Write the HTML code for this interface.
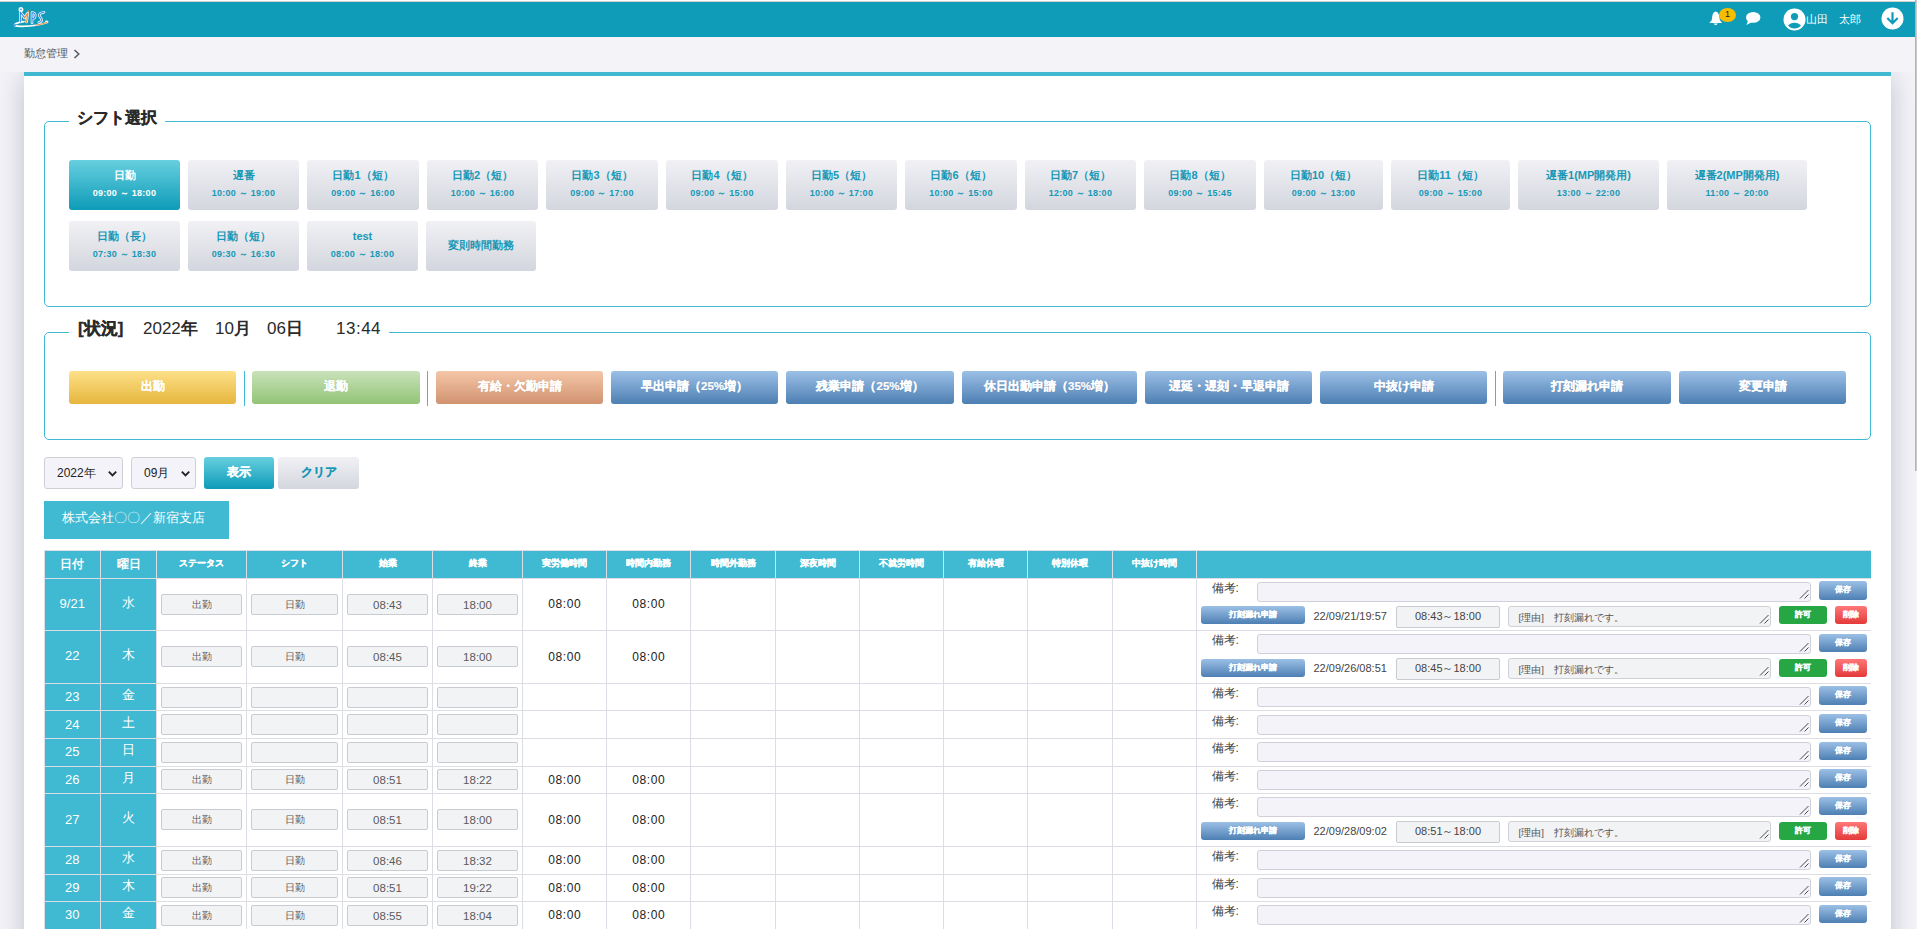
<!DOCTYPE html><html><head><meta charset="utf-8"><style>
*{box-sizing:border-box;margin:0;padding:0}
html,body{width:1917px;height:929px;overflow:hidden;background:#f3f3f8;font-family:"Liberation Sans",sans-serif;color:#333}
.a{position:absolute}
.hd{left:0;top:2px;width:1915px;height:35px;background:#0e9cb9}
.card{left:24px;top:72px;width:1867px;height:900px;background:#fff;border-top:4px solid #40b9d1;}
.fs{border:1px solid #41b9d2;border-radius:5px}
.lg{background:#fff;font-weight:bold;font-size:16px;color:#2a2a2a;-webkit-text-stroke:.3px #2a2a2a;white-space:nowrap;line-height:20px}
.sb{border-radius:3px;background:linear-gradient(#f1f1f5,#d3d6de);color:#1898b6;font-weight:bold;text-align:center;white-space:nowrap}
.sb.on{background:linear-gradient(#67cfdf,#0d9bb8);color:#fff}
.sb .t{position:absolute;left:0;right:0;top:8px;font-size:11px;line-height:14px}
.sb .m{position:absolute;left:0;right:0;top:27px;font-size:9px;line-height:12px;letter-spacing:.25px}
.ab{border-radius:3px;color:#fff;font-weight:bold;font-size:11.5px;text-align:center;line-height:31.5px;height:33px;top:371px;-webkit-text-stroke:.2px #fff;text-shadow:0 0 1px rgba(0,0,0,.12)}
.y{background:linear-gradient(#fde088,#e6b63e)}
.g{background:linear-gradient(#c9e2b9,#92c477)}
.o{background:linear-gradient(#f4c7a8,#d19270)}
.b{background:linear-gradient(#9cc0e6,#4d7fb3)}
.sep{width:1.5px;background:#41b9d2;top:371px;height:35px}
.cell{border-right:1px solid #dcdde5;border-bottom:1px solid #dcdde5}
.th{background:#40b9d2;color:#fff;font-weight:bold;text-align:center}
.inp{background:#f2f3f5;border:1px solid #c8cbd2;border-radius:2px;height:21px;font-size:11px;color:#5a5a5a;text-align:center;line-height:20px}
.val{font-size:12px;color:#222;text-align:center;letter-spacing:.6px;text-indent:.6px}
.ta{background:#f4f3f9;border:1px solid #cfd0d8;border-radius:3px}
.rz{position:absolute;right:1.5px;bottom:1.5px;width:10px;height:10px}
.btn{border-radius:3px;color:#fff;font-weight:bold;-webkit-text-stroke:.25px #fff;font-size:8px;text-align:center}
</style></head><body>
<div class="a" style="left:0;top:0;width:1917px;height:1px;background:#fff"></div>
<div class="a" style="left:0;top:1px;width:1917px;height:1px;background:#d6d1d1"></div>
<div class="a hd"></div>
<svg class="a" style="left:8px;top:4px" width="48" height="28" viewBox="8 4 48 28">
<g fill="none" stroke-linecap="round" stroke-linejoin="round">
<path d="M15 24.5 Q13 26.5 22 26.3 Q38 26 47 22.5 Q48.5 21.5 46 21.3" stroke="#fff" stroke-width="1.8"/>
<path d="M36 25.2 Q43 24 47 22.5" stroke="#f08a3c" stroke-width="1"/>
<path d="M15.5 23.8 Q19 22 24 21.6" stroke="#fff" stroke-width="1.6"/>
<circle cx="15" cy="25" r="1" fill="#3a8ee6"/>
<g stroke="#fff" stroke-width="2.6">
<path d="M20.6 12 L20.3 22 M21 13 L24.6 17.6"/>
<path d="M24.6 17.8 L27.8 13 L26.6 22"/>
<path d="M32 23 L32 12.6 Q35.5 12.6 35.2 15.6 Q35 18.6 32.3 18.8"/>
<path d="M44 12.2 Q38.8 13.2 39.3 15.8 Q41.6 18.6 41.6 20 Q41.2 22.2 38.8 22.6"/>
<circle cx="21" cy="9.4" r="1.2"/>
</g>
<path d="M20.6 12 L20.3 22 M21 13 L24.6 17.6" stroke="#3a8ee6" stroke-width="1.2"/>
<path d="M24.6 17.8 L27.8 13 L26.6 22" stroke="#f08a3c" stroke-width="1.3"/>
<circle cx="28.2" cy="11.2" r="0.9" fill="#f08a3c" stroke="none"/>
<path d="M32 23 L32 12.6 Q35.5 12.6 35.2 15.6 Q35 18.6 32.3 18.8" stroke="#3a8ee6" stroke-width="1.2"/>
<path d="M44 12.2 Q38.8 13.2 39.3 15.8 Q41.6 18.6 41.6 20 Q41.2 22.2 38.8 22.6" stroke="#3a8ee6" stroke-width="1.2"/>
<circle cx="21" cy="9.4" r="0.8" fill="#3a8ee6" stroke="none"/>
</g></svg>
<svg class="a" style="left:1708px;top:10px" width="16" height="17" viewBox="0 0 16 17">
<path d="M7.7 1.6 Q5 2 4.3 6 L3.7 10.3 L1.3 13.1 L14.2 13.1 L11.9 10.3 L11.2 6 Q10.4 2 7.7 1.6Z" fill="#fff"/>
<path d="M5.6 13.6 Q7.7 17 9.8 13.6Z" fill="#fff"/></svg>
<div class="a" style="left:1719px;top:8px;width:17px;height:14px;border-radius:50%;background:#f9bd00;color:#222;font-size:9px;line-height:13px;text-align:center">1</div>
<svg class="a" style="left:1745px;top:11px" width="16" height="15" viewBox="0 0 16 15">
<ellipse cx="8.2" cy="6.4" rx="7.2" ry="5.4" fill="#fff"/>
<path d="M3 9.5 L1.5 14 L7 11Z" fill="#fff"/></svg>
<svg class="a" style="left:1783px;top:8px" width="23" height="23" viewBox="0 0 23 23">
<circle cx="11.5" cy="11.5" r="11" fill="#fff"/>
<circle cx="11.5" cy="8.6" r="3.6" fill="#0e9cb9"/>
<path d="M5 17.2 Q11.5 12.5 18 17.2 Q15.5 20.5 11.5 20.5 Q7.5 20.5 5 17.2Z" fill="#0e9cb9"/></svg>
<div class="a" style="left:1806px;top:11px;font-size:11px;line-height:16px;color:#fff;white-space:nowrap">山田　太郎</div>
<svg class="a" style="left:1881px;top:7px" width="23" height="23" viewBox="0 0 23 23">
<circle cx="11.5" cy="11.5" r="11" fill="#fff"/>
<path d="M11.5 5.3 L11.5 16 M6.3 11 L11.5 16.2 L16.7 11" stroke="#0e9cb9" stroke-width="2.2" fill="none" stroke-linecap="butt"/></svg>
<div class="a" style="left:1915px;top:0;width:1px;height:471px;background:#b2b2b7"></div>
<div class="a" style="left:1916px;top:0;width:1px;height:471px;background:#cacacd"></div>
<div class="a" style="left:24px;top:45px;font-size:11px;line-height:16px;color:#555b62;white-space:nowrap">勤怠管理</div>
<svg class="a" style="left:72.8px;top:49px" width="8" height="10" viewBox="0 0 8 10"><path d="M1.5 1 L5.8 5 L1.5 9" stroke="#555b62" stroke-width="1.5" fill="none"/></svg>
<div class="a" style="left:0;top:72px;width:1915px;height:857px;overflow:hidden"><div class="a" style="left:24px;top:0;width:1867px;height:1000px;box-shadow:0 4px 26px rgba(45,45,85,.26)"></div></div>
<div class="a card"></div>
<div class="a fs" style="left:44px;top:121px;width:1827px;height:186px"></div>
<div class="a lg" style="left:69px;top:108px;padding:0 8.5px 0 7.8px">シフト選択</div>
<div class="a sb on" style="left:69px;top:160px;width:111px;height:50px"><div class="t">日勤</div><div class="m">09:00 ～ 18:00</div></div>
<div class="a sb" style="left:188px;top:160px;width:111px;height:50px"><div class="t">遅番</div><div class="m">10:00 ～ 19:00</div></div>
<div class="a sb" style="left:307px;top:160px;width:112px;height:50px"><div class="t">日勤1（短）</div><div class="m">09:00 ～ 16:00</div></div>
<div class="a sb" style="left:427px;top:160px;width:111px;height:50px"><div class="t">日勤2（短）</div><div class="m">10:00 ～ 16:00</div></div>
<div class="a sb" style="left:546px;top:160px;width:112px;height:50px"><div class="t">日勤3（短）</div><div class="m">09:00 ～ 17:00</div></div>
<div class="a sb" style="left:666px;top:160px;width:112px;height:50px"><div class="t">日勤4（短）</div><div class="m">09:00 ～ 15:00</div></div>
<div class="a sb" style="left:786px;top:160px;width:111px;height:50px"><div class="t">日勤5（短）</div><div class="m">10:00 ～ 17:00</div></div>
<div class="a sb" style="left:905px;top:160px;width:112px;height:50px"><div class="t">日勤6（短）</div><div class="m">10:00 ～ 15:00</div></div>
<div class="a sb" style="left:1025px;top:160px;width:111px;height:50px"><div class="t">日勤7（短）</div><div class="m">12:00 ～ 18:00</div></div>
<div class="a sb" style="left:1144px;top:160px;width:112px;height:50px"><div class="t">日勤8（短）</div><div class="m">09:00 ～ 15:45</div></div>
<div class="a sb" style="left:1264px;top:160px;width:119px;height:50px"><div class="t">日勤10（短）</div><div class="m">09:00 ～ 13:00</div></div>
<div class="a sb" style="left:1391px;top:160px;width:119px;height:50px"><div class="t">日勤11（短）</div><div class="m">09:00 ～ 15:00</div></div>
<div class="a sb" style="left:1518px;top:160px;width:141px;height:50px"><div class="t">遅番1(MP開発用)</div><div class="m">13:00 ～ 22:00</div></div>
<div class="a sb" style="left:1667px;top:160px;width:140px;height:50px"><div class="t">遅番2(MP開発用)</div><div class="m">11:00 ～ 20:00</div></div>
<div class="a sb" style="left:69px;top:221px;width:111px;height:50px"><div class="t">日勤（長）</div><div class="m">07:30 ～ 18:30</div></div>
<div class="a sb" style="left:188px;top:221px;width:111px;height:50px"><div class="t">日勤（短）</div><div class="m">09:30 ～ 16:30</div></div>
<div class="a sb" style="left:307px;top:221px;width:111px;height:50px"><div class="t">test</div><div class="m">08:00 ～ 18:00</div></div>
<div class="a sb" style="left:426px;top:221px;width:110px;height:50px"><div class="t" style="top:17px">変則時間勤務</div></div>
<div class="a fs" style="left:44px;top:332px;width:1827px;height:108px"></div>
<div class="a lg" style="left:69px;top:319px;padding:0 9px 0 9px;width:320px;font-size:17px">[状況]<span style="position:absolute;left:74px;font-weight:normal;-webkit-text-stroke:0">2022<b>年</b></span><span style="position:absolute;left:146px;font-weight:normal;-webkit-text-stroke:0">10<b>月</b></span><span style="position:absolute;left:198px;font-weight:normal;-webkit-text-stroke:0">06<b>日</b></span><span style="position:absolute;left:267px;font-weight:normal;letter-spacing:.5px;-webkit-text-stroke:0">13:44</span></div>
<div class="a ab y" style="left:69px;width:167px">出勤</div>
<div class="a ab g" style="left:252px;width:168px">退勤</div>
<div class="a ab o" style="left:436px;width:167px">有給・欠勤申請</div>
<div class="a ab b" style="left:611px;width:167px">早出申請（25%増）</div>
<div class="a ab b" style="left:786px;width:168px">残業申請（25%増）</div>
<div class="a ab b" style="left:962px;width:175px">休日出勤申請（35%増）</div>
<div class="a ab b" style="left:1145px;width:167px">遅延・遅刻・早退申請</div>
<div class="a ab b" style="left:1320px;width:167px">中抜け申請</div>
<div class="a ab b" style="left:1503px;width:168px">打刻漏れ申請</div>
<div class="a ab b" style="left:1679px;width:167px">変更申請</div>
<div class="a sep" style="left:243.5px"></div>
<div class="a sep" style="left:426.5px"></div>
<div class="a sep" style="left:1494.5px"></div>
<div class="a" style="left:44px;top:457px;width:79px;height:32px;background:#f4f3f9;border:1px solid #cfd0d6;border-radius:3px;font-size:12px;line-height:30px;padding-left:12px;color:#222">2022年<svg style="position:absolute;right:4.5px;top:11.5px" width="11" height="8" viewBox="0 0 11 8"><path d="M1.8 1.6 L5.5 5.3 L9.2 1.6" stroke="#222" stroke-width="1.9" fill="none"/></svg></div>
<div class="a" style="left:131px;top:457px;width:65px;height:32px;background:#f4f3f9;border:1px solid #cfd0d6;border-radius:3px;font-size:12px;line-height:30px;padding-left:12px;color:#222">09月<svg style="position:absolute;right:4.5px;top:11.5px" width="11" height="8" viewBox="0 0 11 8"><path d="M1.8 1.6 L5.5 5.3 L9.2 1.6" stroke="#222" stroke-width="1.9" fill="none"/></svg></div>
<div class="a" style="left:204px;top:457px;width:70px;height:32px;border-radius:3px;background:linear-gradient(#67cfdf,#0d9bb8);color:#fff;font-weight:bold;-webkit-text-stroke:.25px #fff;font-size:12px;line-height:31px;text-align:center">表示</div>
<div class="a" style="left:278px;top:457px;width:81px;height:32px;border-radius:3px;background:linear-gradient(#f1f1f5,#d3d6de);color:#1898b6;font-weight:bold;-webkit-text-stroke:.2px #1898b6;font-size:12px;line-height:31px;text-align:center">クリア</div>
<div class="a" style="left:44px;top:501px;width:185px;height:38px;background:#40b9d2;color:#fff;font-size:13.3px;line-height:34px;padding-left:18px;white-space:nowrap">株式会社〇〇／新宿支店</div>
<div class="a" style="left:44px;top:551px;width:1827px;height:27px;background:#40b9d2"></div>
<div class="a" style="left:44px;top:551px;width:56.5px;height:27px;color:#fff;font-weight:bold;font-size:11.5px;line-height:27px;text-align:center;white-space:nowrap">日付</div>
<div class="a" style="left:100.5px;top:551px;width:56.0px;height:27px;color:#fff;font-weight:bold;font-size:11.5px;line-height:27px;text-align:center;white-space:nowrap">曜日</div>
<div class="a" style="left:156.5px;top:551px;width:90.0px;height:27px;color:#fff;font-weight:bold;-webkit-text-stroke:.3px #fff;font-size:9px;line-height:25px;text-align:center;white-space:nowrap">ステータス</div>
<div class="a" style="left:246.5px;top:551px;width:96.0px;height:27px;color:#fff;font-weight:bold;-webkit-text-stroke:.3px #fff;font-size:9px;line-height:25px;text-align:center;white-space:nowrap">シフト</div>
<div class="a" style="left:342.5px;top:551px;width:90.0px;height:27px;color:#fff;font-weight:bold;-webkit-text-stroke:.3px #fff;font-size:9px;line-height:25px;text-align:center;white-space:nowrap">始業</div>
<div class="a" style="left:432.5px;top:551px;width:90.0px;height:27px;color:#fff;font-weight:bold;-webkit-text-stroke:.3px #fff;font-size:9px;line-height:25px;text-align:center;white-space:nowrap">終業</div>
<div class="a" style="left:522.5px;top:551px;width:84.0px;height:27px;color:#fff;font-weight:bold;-webkit-text-stroke:.3px #fff;font-size:9px;line-height:25px;text-align:center;white-space:nowrap">実労働時間</div>
<div class="a" style="left:606.5px;top:551px;width:84.0px;height:27px;color:#fff;font-weight:bold;-webkit-text-stroke:.3px #fff;font-size:9px;line-height:25px;text-align:center;white-space:nowrap">時間内勤務</div>
<div class="a" style="left:690.5px;top:551px;width:85.0px;height:27px;color:#fff;font-weight:bold;-webkit-text-stroke:.3px #fff;font-size:9px;line-height:25px;text-align:center;white-space:nowrap">時間外勤務</div>
<div class="a" style="left:775.5px;top:551px;width:84.0px;height:27px;color:#fff;font-weight:bold;-webkit-text-stroke:.3px #fff;font-size:9px;line-height:25px;text-align:center;white-space:nowrap">深夜時間</div>
<div class="a" style="left:859.5px;top:551px;width:84.0px;height:27px;color:#fff;font-weight:bold;-webkit-text-stroke:.3px #fff;font-size:9px;line-height:25px;text-align:center;white-space:nowrap">不就労時間</div>
<div class="a" style="left:943.5px;top:551px;width:84.0px;height:27px;color:#fff;font-weight:bold;-webkit-text-stroke:.3px #fff;font-size:9px;line-height:25px;text-align:center;white-space:nowrap">有給休暇</div>
<div class="a" style="left:1027.5px;top:551px;width:85.0px;height:27px;color:#fff;font-weight:bold;-webkit-text-stroke:.3px #fff;font-size:9px;line-height:25px;text-align:center;white-space:nowrap">特別休暇</div>
<div class="a" style="left:1112.5px;top:551px;width:84.0px;height:27px;color:#fff;font-weight:bold;-webkit-text-stroke:.3px #fff;font-size:9px;line-height:25px;text-align:center;white-space:nowrap">中抜け時間</div>
<div class="a" style="left:1196.5px;top:551px;width:674.0px;height:27px;color:#fff;font-weight:bold;-webkit-text-stroke:.3px #fff;font-size:9px;line-height:25px;text-align:center;white-space:nowrap"></div>
<div class="a" style="left:44px;top:578px;width:112.5px;height:52.39999999999998px;background:#40b9d2"></div>
<div class="a" style="left:44px;top:578px;width:56.5px;height:52.39999999999998px;color:#fff;font-size:13px;line-height:52.39999999999998px;text-align:center">9/21</div>
<div class="a" style="left:100.5px;top:578px;width:56px;height:52.39999999999998px;color:#fff;font-size:12.5px;line-height:50.39999999999998px;text-align:center">水</div>
<div class="a inp" style="left:161.0px;top:593.7px;width:81.0px;font-size:10px;line-height:19px">出勤</div>
<div class="a inp" style="left:251.0px;top:593.7px;width:87.0px;font-size:10px;line-height:19px">日勤</div>
<div class="a inp" style="left:347.0px;top:593.7px;width:81.0px;font-size:11.5px;line-height:20px">08:43</div>
<div class="a inp" style="left:437.0px;top:593.7px;width:81.0px;font-size:11.5px;line-height:20px">18:00</div>
<div class="a val" style="left:522.5px;top:596.2px;width:84.0px;line-height:16px">08:00</div>
<div class="a val" style="left:606.5px;top:596.2px;width:84.0px;line-height:16px">08:00</div>
<div class="a" style="left:1211.5px;top:581px;font-size:12px;line-height:14px;color:#444;white-space:nowrap">備考:</div>
<div class="a ta" style="left:1257px;top:581.8px;width:554px;height:20px"><svg class="rz" viewBox="0 0 10 10"><path d="M9.5 1 L1 9.5 M9.5 5.5 L5.5 9.5" stroke="#4a4a4a" stroke-width="1"/></svg></div>
<div class="a btn b" style="left:1819px;top:581.2px;width:48px;height:18.5px;line-height:18.5px">保存</div>
<div class="a btn b" style="left:1201px;top:606.3px;width:104px;height:18px;line-height:18px">打刻漏れ申請</div>
<div class="a" style="left:1313.5px;top:609px;font-size:11px;line-height:14px;color:#444;white-space:nowrap">22/09/21/19:57</div>
<div class="a inp" style="left:1396px;top:606px;width:104px;height:21.5px;font-size:11px;line-height:19.5px;color:#444">08:43～18:00</div>
<div class="a ta" style="left:1508px;top:606px;width:263px;height:20.5px;background:#f2f3f5;font-size:9.6px;line-height:22px;padding-left:9.5px;color:#555;white-space:nowrap">[理由]　打刻漏れです。<svg class="rz" viewBox="0 0 10 10"><path d="M9.5 1 L1 9.5 M9.5 5.5 L5.5 9.5" stroke="#4a4a4a" stroke-width="1"/></svg></div>
<div class="a btn" style="left:1779px;top:606.3px;width:48px;height:18px;line-height:18px;background:#27a744">許可</div>
<div class="a btn" style="left:1835px;top:606.3px;width:32px;height:18px;line-height:18px;background:linear-gradient(#f77,#e33a3a)">削除</div>
<div class="a" style="left:44px;top:630.4px;width:112.5px;height:52.80000000000007px;background:#40b9d2"></div>
<div class="a" style="left:44px;top:630.4px;width:56.5px;height:52.80000000000007px;color:#fff;font-size:13px;line-height:52.80000000000007px;text-align:center">22</div>
<div class="a" style="left:100.5px;top:630.4px;width:56px;height:52.80000000000007px;color:#fff;font-size:12.5px;line-height:50.80000000000007px;text-align:center">木</div>
<div class="a inp" style="left:161.0px;top:646.3px;width:81.0px;font-size:10px;line-height:19px">出勤</div>
<div class="a inp" style="left:251.0px;top:646.3px;width:87.0px;font-size:10px;line-height:19px">日勤</div>
<div class="a inp" style="left:347.0px;top:646.3px;width:81.0px;font-size:11.5px;line-height:20px">08:45</div>
<div class="a inp" style="left:437.0px;top:646.3px;width:81.0px;font-size:11.5px;line-height:20px">18:00</div>
<div class="a val" style="left:522.5px;top:648.8px;width:84.0px;line-height:16px">08:00</div>
<div class="a val" style="left:606.5px;top:648.8px;width:84.0px;line-height:16px">08:00</div>
<div class="a" style="left:1211.5px;top:633.4px;font-size:12px;line-height:14px;color:#444;white-space:nowrap">備考:</div>
<div class="a ta" style="left:1257px;top:634.1999999999999px;width:554px;height:20px"><svg class="rz" viewBox="0 0 10 10"><path d="M9.5 1 L1 9.5 M9.5 5.5 L5.5 9.5" stroke="#4a4a4a" stroke-width="1"/></svg></div>
<div class="a btn b" style="left:1819px;top:633.6px;width:48px;height:18.5px;line-height:18.5px">保存</div>
<div class="a btn b" style="left:1201px;top:658.6999999999999px;width:104px;height:18px;line-height:18px">打刻漏れ申請</div>
<div class="a" style="left:1313.5px;top:661.4px;font-size:11px;line-height:14px;color:#444;white-space:nowrap">22/09/26/08:51</div>
<div class="a inp" style="left:1396px;top:658.4px;width:104px;height:21.5px;font-size:11px;line-height:19.5px;color:#444">08:45～18:00</div>
<div class="a ta" style="left:1508px;top:658.4px;width:263px;height:20.5px;background:#f2f3f5;font-size:9.6px;line-height:22px;padding-left:9.5px;color:#555;white-space:nowrap">[理由]　打刻漏れです。<svg class="rz" viewBox="0 0 10 10"><path d="M9.5 1 L1 9.5 M9.5 5.5 L5.5 9.5" stroke="#4a4a4a" stroke-width="1"/></svg></div>
<div class="a btn" style="left:1779px;top:658.6999999999999px;width:48px;height:18px;line-height:18px;background:#27a744">許可</div>
<div class="a btn" style="left:1835px;top:658.6999999999999px;width:32px;height:18px;line-height:18px;background:linear-gradient(#f77,#e33a3a)">削除</div>
<div class="a" style="left:44px;top:683.2px;width:112.5px;height:27.59999999999991px;background:#40b9d2"></div>
<div class="a" style="left:44px;top:683.2px;width:56.5px;height:27.59999999999991px;color:#fff;font-size:13px;line-height:27.59999999999991px;text-align:center">23</div>
<div class="a" style="left:100.5px;top:683.2px;width:56px;height:27.59999999999991px;color:#fff;font-size:12.5px;line-height:25.59999999999991px;text-align:center">金</div>
<div class="a inp" style="left:161.0px;top:686.5px;width:81.0px;font-size:10px;line-height:19px"></div>
<div class="a inp" style="left:251.0px;top:686.5px;width:87.0px;font-size:10px;line-height:19px"></div>
<div class="a inp" style="left:347.0px;top:686.5px;width:81.0px;font-size:11.5px;line-height:20px"></div>
<div class="a inp" style="left:437.0px;top:686.5px;width:81.0px;font-size:11.5px;line-height:20px"></div>
<div class="a" style="left:1211.5px;top:686.2px;font-size:12px;line-height:14px;color:#444;white-space:nowrap">備考:</div>
<div class="a ta" style="left:1257px;top:687.0px;width:554px;height:20px"><svg class="rz" viewBox="0 0 10 10"><path d="M9.5 1 L1 9.5 M9.5 5.5 L5.5 9.5" stroke="#4a4a4a" stroke-width="1"/></svg></div>
<div class="a btn b" style="left:1819px;top:686.4000000000001px;width:48px;height:18.5px;line-height:18.5px">保存</div>
<div class="a" style="left:44px;top:710.8px;width:112.5px;height:27.600000000000023px;background:#40b9d2"></div>
<div class="a" style="left:44px;top:710.8px;width:56.5px;height:27.600000000000023px;color:#fff;font-size:13px;line-height:27.600000000000023px;text-align:center">24</div>
<div class="a" style="left:100.5px;top:710.8px;width:56px;height:27.600000000000023px;color:#fff;font-size:12.5px;line-height:25.600000000000023px;text-align:center">土</div>
<div class="a inp" style="left:161.0px;top:714.0999999999999px;width:81.0px;font-size:10px;line-height:19px"></div>
<div class="a inp" style="left:251.0px;top:714.0999999999999px;width:87.0px;font-size:10px;line-height:19px"></div>
<div class="a inp" style="left:347.0px;top:714.0999999999999px;width:81.0px;font-size:11.5px;line-height:20px"></div>
<div class="a inp" style="left:437.0px;top:714.0999999999999px;width:81.0px;font-size:11.5px;line-height:20px"></div>
<div class="a" style="left:1211.5px;top:713.8px;font-size:12px;line-height:14px;color:#444;white-space:nowrap">備考:</div>
<div class="a ta" style="left:1257px;top:714.5999999999999px;width:554px;height:20px"><svg class="rz" viewBox="0 0 10 10"><path d="M9.5 1 L1 9.5 M9.5 5.5 L5.5 9.5" stroke="#4a4a4a" stroke-width="1"/></svg></div>
<div class="a btn b" style="left:1819px;top:714.0px;width:48px;height:18.5px;line-height:18.5px">保存</div>
<div class="a" style="left:44px;top:738.4px;width:112.5px;height:27.700000000000045px;background:#40b9d2"></div>
<div class="a" style="left:44px;top:738.4px;width:56.5px;height:27.700000000000045px;color:#fff;font-size:13px;line-height:27.700000000000045px;text-align:center">25</div>
<div class="a" style="left:100.5px;top:738.4px;width:56px;height:27.700000000000045px;color:#fff;font-size:12.5px;line-height:25.700000000000045px;text-align:center">日</div>
<div class="a inp" style="left:161.0px;top:741.75px;width:81.0px;font-size:10px;line-height:19px"></div>
<div class="a inp" style="left:251.0px;top:741.75px;width:87.0px;font-size:10px;line-height:19px"></div>
<div class="a inp" style="left:347.0px;top:741.75px;width:81.0px;font-size:11.5px;line-height:20px"></div>
<div class="a inp" style="left:437.0px;top:741.75px;width:81.0px;font-size:11.5px;line-height:20px"></div>
<div class="a" style="left:1211.5px;top:741.4px;font-size:12px;line-height:14px;color:#444;white-space:nowrap">備考:</div>
<div class="a ta" style="left:1257px;top:742.1999999999999px;width:554px;height:20px"><svg class="rz" viewBox="0 0 10 10"><path d="M9.5 1 L1 9.5 M9.5 5.5 L5.5 9.5" stroke="#4a4a4a" stroke-width="1"/></svg></div>
<div class="a btn b" style="left:1819px;top:741.6px;width:48px;height:18.5px;line-height:18.5px">保存</div>
<div class="a" style="left:44px;top:766.1px;width:112.5px;height:27.299999999999955px;background:#40b9d2"></div>
<div class="a" style="left:44px;top:766.1px;width:56.5px;height:27.299999999999955px;color:#fff;font-size:13px;line-height:27.299999999999955px;text-align:center">26</div>
<div class="a" style="left:100.5px;top:766.1px;width:56px;height:27.299999999999955px;color:#fff;font-size:12.5px;line-height:25.299999999999955px;text-align:center">月</div>
<div class="a inp" style="left:161.0px;top:769.25px;width:81.0px;font-size:10px;line-height:19px">出勤</div>
<div class="a inp" style="left:251.0px;top:769.25px;width:87.0px;font-size:10px;line-height:19px">日勤</div>
<div class="a inp" style="left:347.0px;top:769.25px;width:81.0px;font-size:11.5px;line-height:20px">08:51</div>
<div class="a inp" style="left:437.0px;top:769.25px;width:81.0px;font-size:11.5px;line-height:20px">18:22</div>
<div class="a val" style="left:522.5px;top:771.75px;width:84.0px;line-height:16px">08:00</div>
<div class="a val" style="left:606.5px;top:771.75px;width:84.0px;line-height:16px">08:00</div>
<div class="a" style="left:1211.5px;top:769.1px;font-size:12px;line-height:14px;color:#444;white-space:nowrap">備考:</div>
<div class="a ta" style="left:1257px;top:769.9px;width:554px;height:20px"><svg class="rz" viewBox="0 0 10 10"><path d="M9.5 1 L1 9.5 M9.5 5.5 L5.5 9.5" stroke="#4a4a4a" stroke-width="1"/></svg></div>
<div class="a btn b" style="left:1819px;top:769.3000000000001px;width:48px;height:18.5px;line-height:18.5px">保存</div>
<div class="a" style="left:44px;top:793.4px;width:112.5px;height:53.0px;background:#40b9d2"></div>
<div class="a" style="left:44px;top:793.4px;width:56.5px;height:53.0px;color:#fff;font-size:13px;line-height:53.0px;text-align:center">27</div>
<div class="a" style="left:100.5px;top:793.4px;width:56px;height:53.0px;color:#fff;font-size:12.5px;line-height:51.0px;text-align:center">火</div>
<div class="a inp" style="left:161.0px;top:809.4px;width:81.0px;font-size:10px;line-height:19px">出勤</div>
<div class="a inp" style="left:251.0px;top:809.4px;width:87.0px;font-size:10px;line-height:19px">日勤</div>
<div class="a inp" style="left:347.0px;top:809.4px;width:81.0px;font-size:11.5px;line-height:20px">08:51</div>
<div class="a inp" style="left:437.0px;top:809.4px;width:81.0px;font-size:11.5px;line-height:20px">18:00</div>
<div class="a val" style="left:522.5px;top:811.9px;width:84.0px;line-height:16px">08:00</div>
<div class="a val" style="left:606.5px;top:811.9px;width:84.0px;line-height:16px">08:00</div>
<div class="a" style="left:1211.5px;top:796.4px;font-size:12px;line-height:14px;color:#444;white-space:nowrap">備考:</div>
<div class="a ta" style="left:1257px;top:797.1999999999999px;width:554px;height:20px"><svg class="rz" viewBox="0 0 10 10"><path d="M9.5 1 L1 9.5 M9.5 5.5 L5.5 9.5" stroke="#4a4a4a" stroke-width="1"/></svg></div>
<div class="a btn b" style="left:1819px;top:796.6px;width:48px;height:18.5px;line-height:18.5px">保存</div>
<div class="a btn b" style="left:1201px;top:821.6999999999999px;width:104px;height:18px;line-height:18px">打刻漏れ申請</div>
<div class="a" style="left:1313.5px;top:824.4px;font-size:11px;line-height:14px;color:#444;white-space:nowrap">22/09/28/09:02</div>
<div class="a inp" style="left:1396px;top:821.4px;width:104px;height:21.5px;font-size:11px;line-height:19.5px;color:#444">08:51～18:00</div>
<div class="a ta" style="left:1508px;top:821.4px;width:263px;height:20.5px;background:#f2f3f5;font-size:9.6px;line-height:22px;padding-left:9.5px;color:#555;white-space:nowrap">[理由]　打刻漏れです。<svg class="rz" viewBox="0 0 10 10"><path d="M9.5 1 L1 9.5 M9.5 5.5 L5.5 9.5" stroke="#4a4a4a" stroke-width="1"/></svg></div>
<div class="a btn" style="left:1779px;top:821.6999999999999px;width:48px;height:18px;line-height:18px;background:#27a744">許可</div>
<div class="a btn" style="left:1835px;top:821.6999999999999px;width:32px;height:18px;line-height:18px;background:linear-gradient(#f77,#e33a3a)">削除</div>
<div class="a" style="left:44px;top:846.4px;width:112.5px;height:27.700000000000045px;background:#40b9d2"></div>
<div class="a" style="left:44px;top:846.4px;width:56.5px;height:27.700000000000045px;color:#fff;font-size:13px;line-height:27.700000000000045px;text-align:center">28</div>
<div class="a" style="left:100.5px;top:846.4px;width:56px;height:27.700000000000045px;color:#fff;font-size:12.5px;line-height:25.700000000000045px;text-align:center">水</div>
<div class="a inp" style="left:161.0px;top:849.75px;width:81.0px;font-size:10px;line-height:19px">出勤</div>
<div class="a inp" style="left:251.0px;top:849.75px;width:87.0px;font-size:10px;line-height:19px">日勤</div>
<div class="a inp" style="left:347.0px;top:849.75px;width:81.0px;font-size:11.5px;line-height:20px">08:46</div>
<div class="a inp" style="left:437.0px;top:849.75px;width:81.0px;font-size:11.5px;line-height:20px">18:32</div>
<div class="a val" style="left:522.5px;top:852.25px;width:84.0px;line-height:16px">08:00</div>
<div class="a val" style="left:606.5px;top:852.25px;width:84.0px;line-height:16px">08:00</div>
<div class="a" style="left:1211.5px;top:849.4px;font-size:12px;line-height:14px;color:#444;white-space:nowrap">備考:</div>
<div class="a ta" style="left:1257px;top:850.1999999999999px;width:554px;height:20px"><svg class="rz" viewBox="0 0 10 10"><path d="M9.5 1 L1 9.5 M9.5 5.5 L5.5 9.5" stroke="#4a4a4a" stroke-width="1"/></svg></div>
<div class="a btn b" style="left:1819px;top:849.6px;width:48px;height:18.5px;line-height:18.5px">保存</div>
<div class="a" style="left:44px;top:874.1px;width:112.5px;height:27.299999999999955px;background:#40b9d2"></div>
<div class="a" style="left:44px;top:874.1px;width:56.5px;height:27.299999999999955px;color:#fff;font-size:13px;line-height:27.299999999999955px;text-align:center">29</div>
<div class="a" style="left:100.5px;top:874.1px;width:56px;height:27.299999999999955px;color:#fff;font-size:12.5px;line-height:25.299999999999955px;text-align:center">木</div>
<div class="a inp" style="left:161.0px;top:877.25px;width:81.0px;font-size:10px;line-height:19px">出勤</div>
<div class="a inp" style="left:251.0px;top:877.25px;width:87.0px;font-size:10px;line-height:19px">日勤</div>
<div class="a inp" style="left:347.0px;top:877.25px;width:81.0px;font-size:11.5px;line-height:20px">08:51</div>
<div class="a inp" style="left:437.0px;top:877.25px;width:81.0px;font-size:11.5px;line-height:20px">19:22</div>
<div class="a val" style="left:522.5px;top:879.75px;width:84.0px;line-height:16px">08:00</div>
<div class="a val" style="left:606.5px;top:879.75px;width:84.0px;line-height:16px">08:00</div>
<div class="a" style="left:1211.5px;top:877.1px;font-size:12px;line-height:14px;color:#444;white-space:nowrap">備考:</div>
<div class="a ta" style="left:1257px;top:877.9px;width:554px;height:20px"><svg class="rz" viewBox="0 0 10 10"><path d="M9.5 1 L1 9.5 M9.5 5.5 L5.5 9.5" stroke="#4a4a4a" stroke-width="1"/></svg></div>
<div class="a btn b" style="left:1819px;top:877.3000000000001px;width:48px;height:18.5px;line-height:18.5px">保存</div>
<div class="a" style="left:44px;top:901.4px;width:112.5px;height:27.600000000000023px;background:#40b9d2"></div>
<div class="a" style="left:44px;top:901.4px;width:56.5px;height:27.600000000000023px;color:#fff;font-size:13px;line-height:27.600000000000023px;text-align:center">30</div>
<div class="a" style="left:100.5px;top:901.4px;width:56px;height:27.600000000000023px;color:#fff;font-size:12.5px;line-height:25.600000000000023px;text-align:center">金</div>
<div class="a inp" style="left:161.0px;top:904.7px;width:81.0px;font-size:10px;line-height:19px">出勤</div>
<div class="a inp" style="left:251.0px;top:904.7px;width:87.0px;font-size:10px;line-height:19px">日勤</div>
<div class="a inp" style="left:347.0px;top:904.7px;width:81.0px;font-size:11.5px;line-height:20px">08:55</div>
<div class="a inp" style="left:437.0px;top:904.7px;width:81.0px;font-size:11.5px;line-height:20px">18:04</div>
<div class="a val" style="left:522.5px;top:907.2px;width:84.0px;line-height:16px">08:00</div>
<div class="a val" style="left:606.5px;top:907.2px;width:84.0px;line-height:16px">08:00</div>
<div class="a" style="left:1211.5px;top:904.4px;font-size:12px;line-height:14px;color:#444;white-space:nowrap">備考:</div>
<div class="a ta" style="left:1257px;top:905.1999999999999px;width:554px;height:20px"><svg class="rz" viewBox="0 0 10 10"><path d="M9.5 1 L1 9.5 M9.5 5.5 L5.5 9.5" stroke="#4a4a4a" stroke-width="1"/></svg></div>
<div class="a btn b" style="left:1819px;top:904.6px;width:48px;height:18.5px;line-height:18.5px">保存</div>
<div class="a" style="left:43.5px;top:551px;width:1px;height:378px;background:#dcdde5"></div>
<div class="a" style="left:100.0px;top:551px;width:1px;height:378px;background:#dcdde5"></div>
<div class="a" style="left:156.0px;top:551px;width:1px;height:378px;background:#dcdde5"></div>
<div class="a" style="left:246.0px;top:551px;width:1px;height:378px;background:#dcdde5"></div>
<div class="a" style="left:342.0px;top:551px;width:1px;height:378px;background:#dcdde5"></div>
<div class="a" style="left:432.0px;top:551px;width:1px;height:378px;background:#dcdde5"></div>
<div class="a" style="left:522.0px;top:551px;width:1px;height:378px;background:#dcdde5"></div>
<div class="a" style="left:606.0px;top:551px;width:1px;height:378px;background:#dcdde5"></div>
<div class="a" style="left:690.0px;top:551px;width:1px;height:378px;background:#dcdde5"></div>
<div class="a" style="left:775.0px;top:551px;width:1px;height:378px;background:#dcdde5"></div>
<div class="a" style="left:859.0px;top:551px;width:1px;height:378px;background:#dcdde5"></div>
<div class="a" style="left:943.0px;top:551px;width:1px;height:378px;background:#dcdde5"></div>
<div class="a" style="left:1027.0px;top:551px;width:1px;height:378px;background:#dcdde5"></div>
<div class="a" style="left:1112.0px;top:551px;width:1px;height:378px;background:#dcdde5"></div>
<div class="a" style="left:1196.0px;top:551px;width:1px;height:378px;background:#dcdde5"></div>
<div class="a" style="left:44px;top:550.0px;width:1827px;height:1px;background:#dcdde5"></div>
<div class="a" style="left:44px;top:577.5px;width:1827px;height:1px;background:#dcdde5"></div>
<div class="a" style="left:44px;top:629.9px;width:1827px;height:1px;background:#dcdde5"></div>
<div class="a" style="left:44px;top:682.7px;width:1827px;height:1px;background:#dcdde5"></div>
<div class="a" style="left:44px;top:710.3px;width:1827px;height:1px;background:#dcdde5"></div>
<div class="a" style="left:44px;top:737.9px;width:1827px;height:1px;background:#dcdde5"></div>
<div class="a" style="left:44px;top:765.6px;width:1827px;height:1px;background:#dcdde5"></div>
<div class="a" style="left:44px;top:792.9px;width:1827px;height:1px;background:#dcdde5"></div>
<div class="a" style="left:44px;top:845.9px;width:1827px;height:1px;background:#dcdde5"></div>
<div class="a" style="left:44px;top:873.6px;width:1827px;height:1px;background:#dcdde5"></div>
<div class="a" style="left:44px;top:900.9px;width:1827px;height:1px;background:#dcdde5"></div>
</body></html>
